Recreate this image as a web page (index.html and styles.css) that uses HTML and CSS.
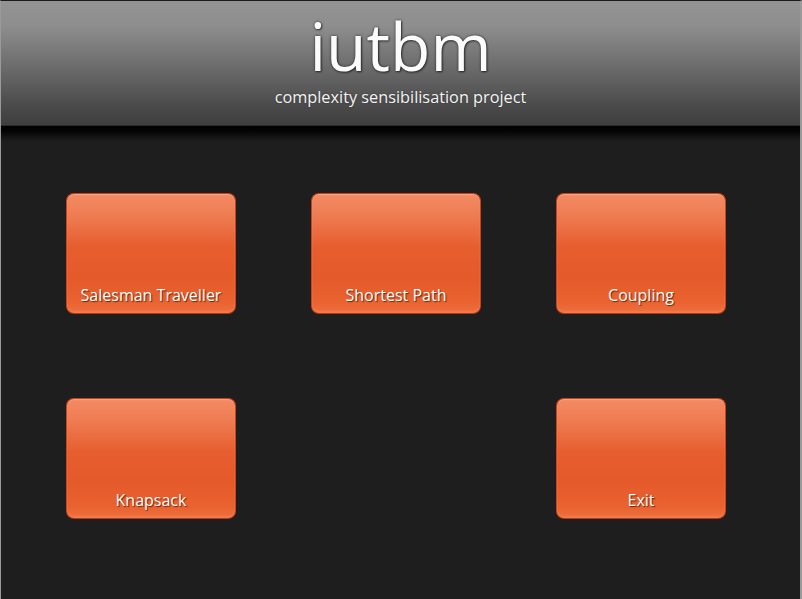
FILE: index.html
```html
<!DOCTYPE html>
<html>
<head>
<meta charset="utf-8">
<title>iutbm</title>
<link rel="stylesheet" href="styles.css">
</head>
<body>
<div class="frame">
  <header class="header">
    <h1 class="title">iutbm</h1>
    <p class="subtitle">complexity sensibilisation project</p>
  </header>
  <div class="shadow"></div>
  <main class="grid">
    <div class="btn">Salesman Traveller</div>
    <div class="btn">Shortest Path</div>
    <div class="btn">Coupling</div>
    <div class="btn">Knapsack</div>
    <div class="empty"></div>
    <div class="btn">Exit</div>
  </main>
</div>
</body>
</html>
```
FILE: styles.css
```css
html, body {
  margin: 0;
  padding: 0;
  background: #1e1e1e;
}
body {
  font-family: "Open Sans", "Noto Sans", sans-serif;
}
.frame {
  width: 802px;
  height: 599px;
  box-sizing: border-box;
  border-left: 1px solid #9a9a9a;
  border-right: 2px solid #9a9a9a;
  border-top: 1px solid #1a1a1a;
  background: #1e1e1e;
  overflow: hidden;
  display: flex;
  flex-direction: column;
}
.header {
  height: 125px;
  flex: none;
  box-sizing: border-box;
  border-bottom: 1px solid #2c2c2c;
  background: linear-gradient(to bottom, #939393 0%, #8e8e8e 20%, #6a6a6a 55%, #4a4a4a 85%, #3e3e3e 100%);
  display: flex;
  flex-direction: column;
  align-items: center;
}
.title {
  margin: 0;
  font-weight: 400;
  font-size: 66px;
  line-height: 88px;
  color: #fbfbfb;
  text-shadow: 0 0 3px rgba(0,0,0,0.6), 1px 1px 2px rgba(0,0,0,0.5);
}
.subtitle {
  margin: 0;
  font-size: 16.3px;
  line-height: 16px;
  color: #f4f4f4;
  text-shadow: 0 0 2px rgba(0,0,0,0.35);
}
.shadow {
  height: 16px;
  flex: none;
  background: linear-gradient(to bottom, #000 0%, #050505 35%, #161616 75%, #1e1e1e 100%);
}
.grid {
  display: grid;
  grid-template-columns: repeat(3, 170px);
  grid-template-rows: 121px 121px;
  column-gap: 75px;
  row-gap: 84px;
  padding-left: 65px;
  padding-top: 51px;
}
.btn {
  box-sizing: border-box;
  border: 1px solid #c9431a;
  border-bottom-color: #b33a12;
  border-radius: 8px;
  background: linear-gradient(to bottom, #f38b64 0%, #ee7a50 20%, #e65d2e 45%, #e55a2b 70%, #e9622f 90%, #ef6f3f 100%);
  box-shadow: inset 0 1px 1px rgba(255,200,170,0.45), inset 0 -2px 2px rgba(255,150,110,0.35);
  color: #ffffff;
  font-size: 16px;
  line-height: 20px;
  display: flex;
  align-items: flex-end;
  justify-content: center;
  padding-bottom: 8px;
  text-shadow: 1px 1px 1px rgba(60,20,0,0.75);
}
```
